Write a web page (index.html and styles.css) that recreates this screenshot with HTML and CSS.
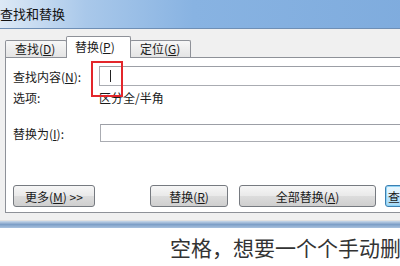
FILE: index.html
```
<!DOCTYPE html>
<html lang="zh-CN">
<head>
    <meta charset="UTF-8">
    <title>查找和替换</title>
    <link rel="stylesheet" href="styles.css">
</head>
<body>
    <div class="dialog">
        <div class="titlebar">查找和替换</div>
        <div class="dialog-body">
            <div class="tabs">
                <div class="tab">查找(<u>D</u>)</div>
                <div class="tab active">替换(<u>P</u>)</div>
                <div class="tab">定位(<u>G</u>)</div>
            </div>
            <div class="panel">
                <div class="row row-find">
                    <label class="label">查找内容(<u>N</u>):</label>
                    <div class="field"><span class="caret"></span></div>
                </div>
                <div class="row row-options">
                    <span class="label">选项:</span>
                    <span class="option-text">区分全/半角</span>
                </div>
                <div class="row row-replace">
                    <label class="label">替换为(<u>I</u>):</label>
                    <div class="field"></div>
                </div>
                <div class="buttons">
                    <button class="btn btn-more">更多(<u>M</u>) &gt;&gt;</button>
                    <button class="btn btn-replace">替换(<u>R</u>)</button>
                    <button class="btn btn-all">全部替换(<u>A</u>)</button>
                    <button class="btn btn-next">查</button>
                </div>
                <div class="highlight"></div>
            </div>
            <div class="panel-foot"></div>
        </div>
        <div class="separator"></div>
    </div>
    <p class="caption">空格，想要一个个手动删</p>
</body>
</html>
```

FILE: styles.css
```
body {
    margin: 0;
    width: 400px;
    height: 266px;
    overflow: hidden;
    background-color: #fff;
    font-family: "Noto Sans CJK SC", "Liberation Sans", sans-serif;
    font-size: 12px;
    color: #1a1a1a;
}
.dialog {
    width: 430px;
}
.titlebar {
    height: 29px;
    line-height: 28px;
    padding-left: 0;
    font-size: 13px;
    color: #111;
    background: linear-gradient(90deg, #dde9f6 0%, #a9c8ea 20%, #88b3e2 45%, #7eabdd 100%);
    border-bottom: 1px solid #6f8fb5;
    box-sizing: border-box;
}
.dialog-body {
    background-color: #f0f0f0;
    padding: 0 0 0 5px;
}
.tabs {
    display: flex;
    align-items: flex-end;
    height: 28px;
    position: relative;
    z-index: 1;
}
.tab {
    height: 16px;
    line-height: 16px;
    padding: 0 8px 0 9px;
    border: 1px solid #8e9198;
    border-bottom: none;
    border-radius: 2px 2px 0 0;
    background: linear-gradient(#f7f7f7, #e4e4e4);
    font-size: 12px;
    width: 43px;
}
.tab + .tab {
    margin-left: -1px;
}
.tab.active {
    height: 21px;
    line-height: 19px;
    width: 47px;
    background: #fff;
    margin-bottom: -1px;
    padding: 0 8px;
}
.tab.active + .tab {
    width: 42px;
}
.panel {
    position: relative;
    height: 154px;
    background-color: #fff;
    border: 1px solid #8e9198;
    border-right: none;
    padding: 0 0 0 7px;
}
.row {
    display: flex;
    align-items: center;
}
.label {
    width: 86px;
    flex-shrink: 0;
}
.row-find {
    margin-top: 8px;
    height: 20px;
}
.row-options {
    margin-top: 1px;
    height: 20px;
}
.row-replace {
    margin-top: 17px;
    height: 18px;
}
.row-replace .label {
    width: 87px;
}
.field {
    flex: 1;
    height: 100%;
    box-sizing: border-box;
    border: 1px solid #aaacb2;
    border-top-color: #9c9fa6;
    position: relative;
}
.caret {
    position: absolute;
    left: 10px;
    top: 3px;
    width: 1px;
    height: 12px;
    background-color: #222;
}
.buttons {
    display: flex;
    margin-top: 43px;
    height: 22px;
}
.btn {
    flex-shrink: 0;
    height: 22px;
    box-sizing: border-box;
    border: 1px solid #767a80;
    border-radius: 3px;
    background: linear-gradient(#f6f6f6 0%, #e9e9e9 50%, #dcdcdc 52%, #cfcfcf 100%);
    font-family: "Noto Sans CJK SC", "Liberation Sans", sans-serif;
    font-size: 12px;
    color: #1a1a1a;
    padding: 0;
    white-space: nowrap;
    overflow: hidden;
}
.btn-more {
    width: 82px;
}
.btn-replace {
    width: 78px;
    margin-left: 55px;
}
.btn-all {
    width: 137px;
    margin-left: 11px;
}
.btn-next {
    width: 40px;
    margin-left: 9px;
    border-color: #3c7fb1;
    background: linear-gradient(#eaf6fd 0%, #d9f0fc 50%, #bee6fd 52%, #a7d9f5 100%);
    box-shadow: inset 0 0 0 1px #8fd3f5;
    text-align: left;
    padding-left: 2px;
}
.highlight {
    position: absolute;
    left: 85px;
    top: 3px;
    width: 28px;
    height: 32px;
    border: 2px solid #e3262b;
}
.panel-foot {
    height: 7px;
}
.separator {
    height: 7px;
    background: linear-gradient(#c8d8ea, #7d9fc7 50%, #a9c2de);
    border-top: 1px solid #e0e0e0;
}
.caption {
    margin: 6px 0 0 170px;
    white-space: nowrap;
    font-size: 21px;
    line-height: 26px;
    color: #333;
}
```
